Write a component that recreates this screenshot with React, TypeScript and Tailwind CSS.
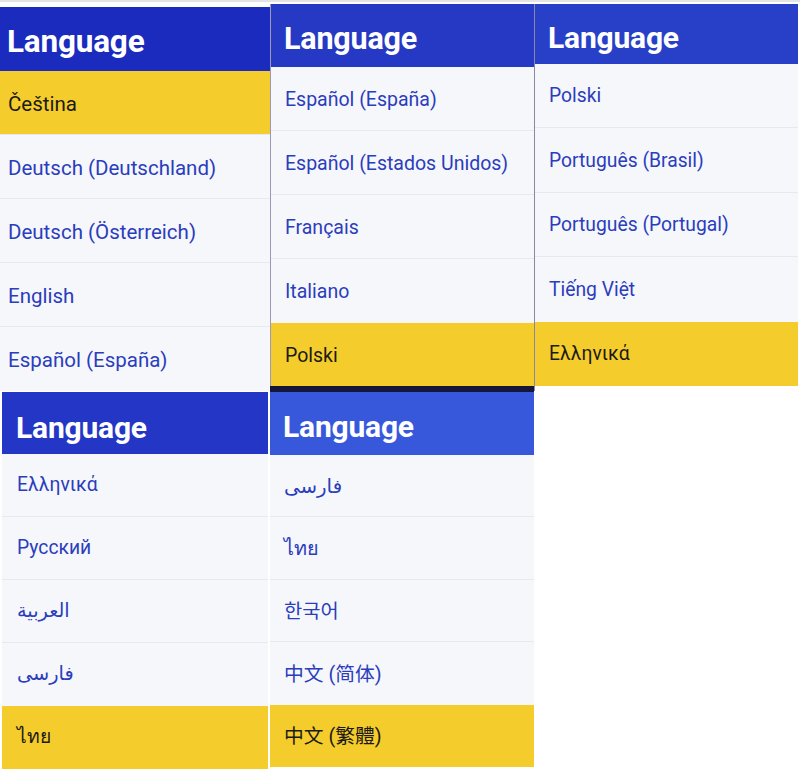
import React from 'react'

type Panel = {
    items: string[]
    selected: number
    header: string
    wrap: string
    headerH: string
    title: string
    rowH: string
    pad: string
    topBar?: boolean
}

const panels: Panel[] = [
    {
        items: ['Čeština', 'Deutsch (Deutschland)', 'Deutsch (Österreich)', 'English', 'Español (España)'],
        selected: 0,
        header: 'bg-[#1a2bbd]',
        wrap: 'w-[270px] mt-[7px]',
        headerH: 'h-[64px] pl-[7px] pt-[6px]',
        title: 'text-[31.5px]',
        rowH: 'h-[64px] pt-[3px] text-[20.5px]',
        pad: 'pl-[8px]',
    },
    {
        items: ['Español (España)', 'Español (Estados Unidos)', 'Français', 'Italiano', 'Polski'],
        selected: 4,
        header: 'bg-[#2539c4]',
        wrap: 'w-[264px] mt-[4px] border-l border-[#9a9ab8]',
        headerH: 'h-[63px] pl-[13px] pt-[6px]',
        title: 'text-[30.5px]',
        rowH: 'h-[64px] pt-[2px] text-[19.5px]',
        pad: 'pl-[14px]',
    },
    {
        items: ['Polski', 'Português (Brasil)', 'Português (Portugal)', 'Tiếng Việt', 'Ελληνικά'],
        selected: 4,
        header: 'bg-[#2840c8]',
        wrap: 'w-[264px] mt-[4px] border-l border-[#8a86a8]',
        headerH: 'h-[60px] pl-[13px] pt-[7px]',
        title: 'text-[30px]',
        rowH: 'h-[64.4px] pt-[2px] text-[19.3px]',
        pad: 'pl-[14px]',
    },
]

const bottom: Panel[] = [
    {
        items: ['Ελληνικά', 'Русский', 'العربية', 'فارسی', 'ไทย'],
        selected: 4,
        header: 'bg-[#2436c6]',
        wrap: 'w-[266px] ml-[2px] mt-[1px]',
        headerH: 'h-[62px] pl-[14px] pt-[8px]',
        title: 'text-[30px]',
        rowH: 'h-[63px] text-[19.3px]',
        pad: 'pl-[15px]',
    },
    {
        items: ['فارسی', 'ไทย', '한국어', '中文 (简体)', '中文 (繁體)'],
        selected: 4,
        header: 'bg-[#3858dc]',
        wrap: 'w-[264px] ml-[2px] -mt-[5px]',
        headerH: 'h-[63px] pl-[13px] pt-[6px]',
        title: 'text-[30px]',
        rowH: 'h-[62.4px] pt-[2px] text-[19.8px]',
        pad: 'pl-[14px]',
        topBar: true,
    },
]

const font = { fontFamily: 'Roboto, "Noto Sans CJK TC", "DejaVu Sans", "Noto Sans", sans-serif' }

function LanguagePanel({ p }: { p: Panel }) {
    return (
        <div className={`flex flex-col shrink-0 ${p.wrap}`}>
            {p.topBar && <div className='h-[6px] bg-[#14163a]'></div>}
            <div className={`flex items-center ${p.header} ${p.headerH}`}>
                <h1 className={`${p.title} font-bold text-white tracking-[-0.2px]`}>Language</h1>
            </div>
            {p.items.map((item, i) => (
                <div
                    key={i}
                    className={`flex items-center ${p.rowH} ${p.pad} ${i === p.selected ? 'bg-[#f4cd2c] text-[#1c1a14]' : 'bg-[#f5f7fb] text-[#2b3dbc]'} ${i < p.items.length - 1 && i + 1 !== p.selected ? 'border-b border-[#e6e9f0]' : ''}`}
                >
                    <span>{item}</span>
                </div>
            ))}
        </div>
    )
}

export default function App() {
    return (
        <div className='w-[800px] h-[773px] bg-white overflow-hidden' style={font}>
            <div className='h-[2px] bg-[#e4e4e6]'></div>
            <div className='flex -mt-[2px]'>
                {panels.map((p, i) => <LanguagePanel key={i} p={p} />)}
            </div>
            <div className='flex'>
                {bottom.map((p, i) => <LanguagePanel key={i} p={p} />)}
            </div>
        </div>
    )
}
